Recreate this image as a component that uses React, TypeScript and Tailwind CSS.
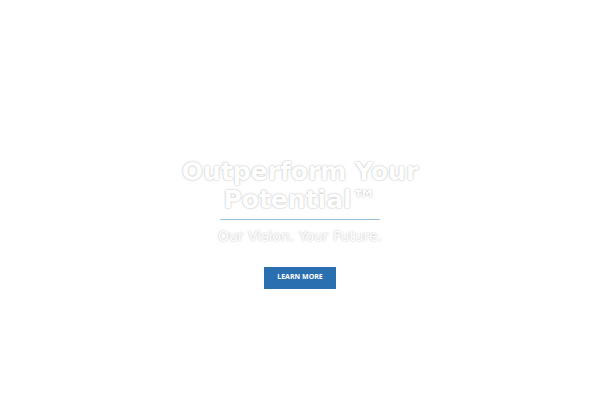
export default function App() {
  return (
    <div className="w-[600px] h-[400px] bg-white flex flex-col items-center justify-center font-['DejaVu_Sans',sans-serif]">
      <div className="flex flex-col items-center mt-[46px]">
        <h1 className="text-white font-bold text-[25px] leading-[28px] text-center [text-shadow:0_0_2px_rgba(0,0,0,0.35)]">
          Outperform Your
          <br />
          Potential™
        </h1>
        <div className="w-[160px] h-px bg-[#9cc4df] mt-[5px]" />
        <p className="text-white text-[14px] leading-[18px] mt-[7px] [text-shadow:0_0_2px_rgba(0,0,0,0.3)]">
          Our Vision. Your Future.
        </p>
        <button className="mt-[22px] w-[72px] h-[22px] bg-[#2a6fb0] text-white text-[7px] font-bold font-['Open_Sans',sans-serif]">
          LEARN MORE
        </button>
      </div>
    </div>
  );
}
